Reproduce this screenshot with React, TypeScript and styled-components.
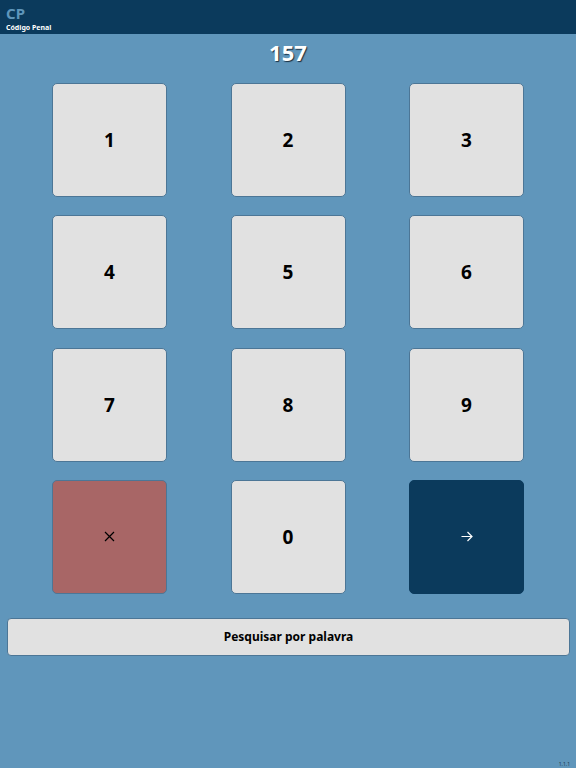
import styled, { createGlobalStyle } from 'styled-components'

const GlobalStyle = createGlobalStyle`
  html, body {
    margin: 0;
    padding: 0;
    background: #6096bb;
    font-family: "Noto Sans", "Open Sans", sans-serif;
  }
  #root {
    min-height: 768px;
  }
`

const Page = styled.div`
  position: relative;
  display: flex;
  flex-direction: column;
  min-height: 768px;
  background: #6096bb;
`

const Header = styled.header`
  height: 34px;
  background: #0b3a5c;
  padding: 5px 6px 0;
  box-sizing: border-box;
  display: flex;
  flex-direction: column;
`

const Logo = styled.span`
  color: #5f96bb;
  font-size: 15px;
  font-weight: 700;
  line-height: 17px;
`

const Subtitle = styled.span`
  color: #ffffff;
  font-size: 7px;
  font-weight: 700;
  line-height: 9px;
  margin-top: 1px;
`

const Display = styled.div`
  height: 36px;
  display: flex;
  align-items: center;
  justify-content: center;
  color: #ffffff;
  font-size: 22px;
  font-weight: 700;
  text-shadow: 1px 1px 1px #1b2f40;
`

const Pad = styled.div`
  display: grid;
  grid-template-columns: repeat(3, 115px);
  grid-auto-rows: 114px;
  justify-content: space-between;
  row-gap: 18.3px;
  padding: 13px 52px 0;
`

type Variant = 'digit' | 'clear' | 'enter'

const bg: Record<Variant, string> = {
  digit: '#e1e1e1',
  clear: '#a86666',
  enter: '#0b3a5c',
}

const Key = styled.button<{ $variant: Variant }>`
  display: flex;
  align-items: center;
  justify-content: center;
  background: ${({ $variant }) => bg[$variant]};
  border: 1px solid ${({ $variant }) => ($variant === 'enter' ? '#0b3a5c' : '#4c7696')};
  border-radius: 5px;
  color: #000000;
  font-family: inherit;
  font-size: 19px;
  font-weight: 700;
  padding: 0;
  cursor: pointer;
`

const SearchButton = styled.button`
  margin: 24px 6px 0 7px;
  height: 38px;
  background: #e1e1e1;
  border: 1px solid #4c7696;
  border-radius: 4px;
  color: #000000;
  font-family: inherit;
  font-size: 12px;
  font-weight: 700;
  cursor: pointer;
`

const Version = styled.span`
  position: absolute;
  right: 6px;
  bottom: 1px;
  font-size: 5px;
  color: #1d3a50;
`

const CloseIcon = () => (
  <svg width="11" height="11" viewBox="0 0 11 11">
    <path d="M1 1 L10 10 M10 1 L1 10" stroke="#000" strokeWidth="1.2" fill="none" />
  </svg>
)

const ArrowIcon = () => (
  <svg width="12" height="11" viewBox="0 0 12 11">
    <path d="M0.5 5.5 H11 M6.5 1 L11 5.5 L6.5 10" stroke="#fff" strokeWidth="1.2" fill="none" />
  </svg>
)

const App = () => {
  const digits = ['1', '2', '3', '4', '5', '6', '7', '8', '9']
  return (
    <Page>
      <GlobalStyle />
      <Header>
        <Logo>CP</Logo>
        <Subtitle>Código Penal</Subtitle>
      </Header>
      <Display>157</Display>
      <Pad>
        {digits.map((d) => (
          <Key key={d} $variant="digit">{d}</Key>
        ))}
        <Key $variant="clear"><CloseIcon /></Key>
        <Key $variant="digit">0</Key>
        <Key $variant="enter"><ArrowIcon /></Key>
      </Pad>
      <SearchButton>Pesquisar por palavra</SearchButton>
      <Version>1.1.1</Version>
    </Page>
  )
}

export default App
